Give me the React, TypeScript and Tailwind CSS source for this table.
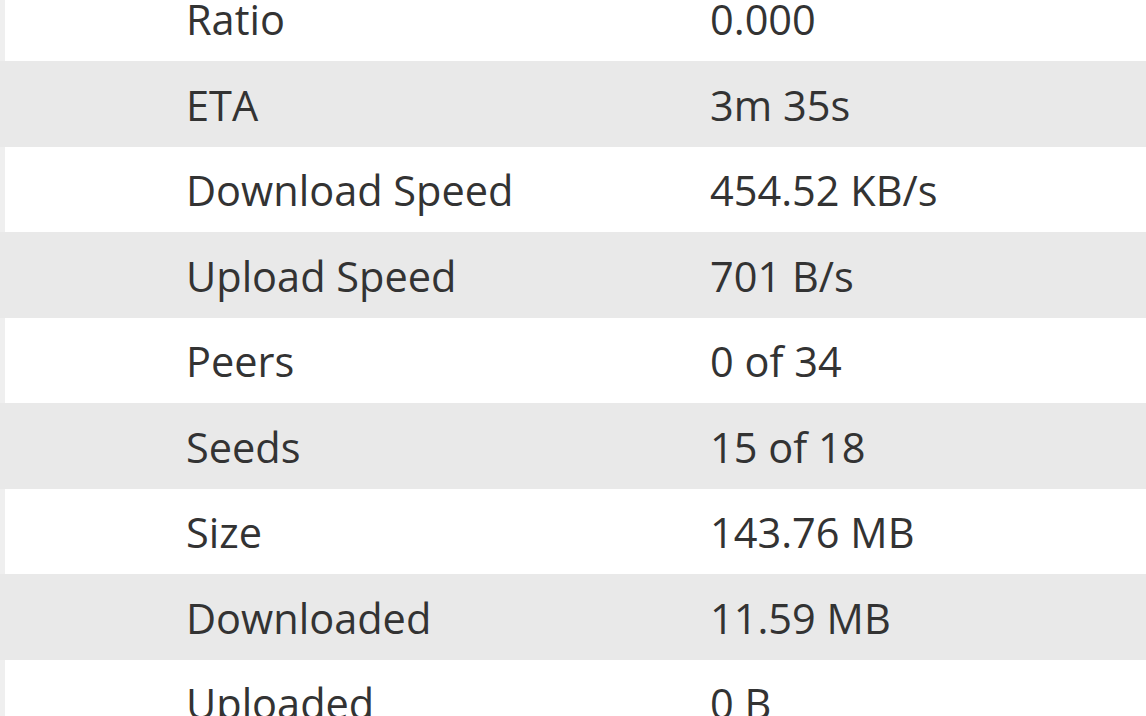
const rows: [string, string][] = [
  ['Ratio', '0.000'],
  ['ETA', '3m 35s'],
  ['Download Speed', '454.52 KB/s'],
  ['Upload Speed', '701 B/s'],
  ['Peers', '0 of 34'],
  ['Seeds', '15 of 18'],
  ['Size', '143.76 MB'],
  ['Downloaded', '11.59 MB'],
  ['Uploaded', '0 B'],
];

export default function App() {
  return (
    <div className="h-[716px] w-[1146px] overflow-hidden bg-white font-['Open_Sans',sans-serif] text-[#333333]">
      <div className="-mt-[24.5px] flex flex-col">
        {rows.map(([label, value], i) => (
          <div
            key={label}
            className={
              i % 2 === 1
                ? 'flex h-[85.5px] items-center bg-[#e9e9e9] pt-[3px]'
                : 'flex h-[85.5px] items-center border-l-[5px] border-[#efefef] bg-white pt-[3px]'
            }
          >
            <span
              className={
                i % 2 === 1
                  ? 'box-content w-[524px] shrink-0 pl-[186px] text-[41.5px] leading-none'
                  : 'box-content w-[524px] shrink-0 pl-[181px] text-[41.5px] leading-none'
              }
            >
              {label}
            </span>
            <span className="text-[41.5px] leading-none">{value}</span>
          </div>
        ))}
      </div>
    </div>
  );
}
